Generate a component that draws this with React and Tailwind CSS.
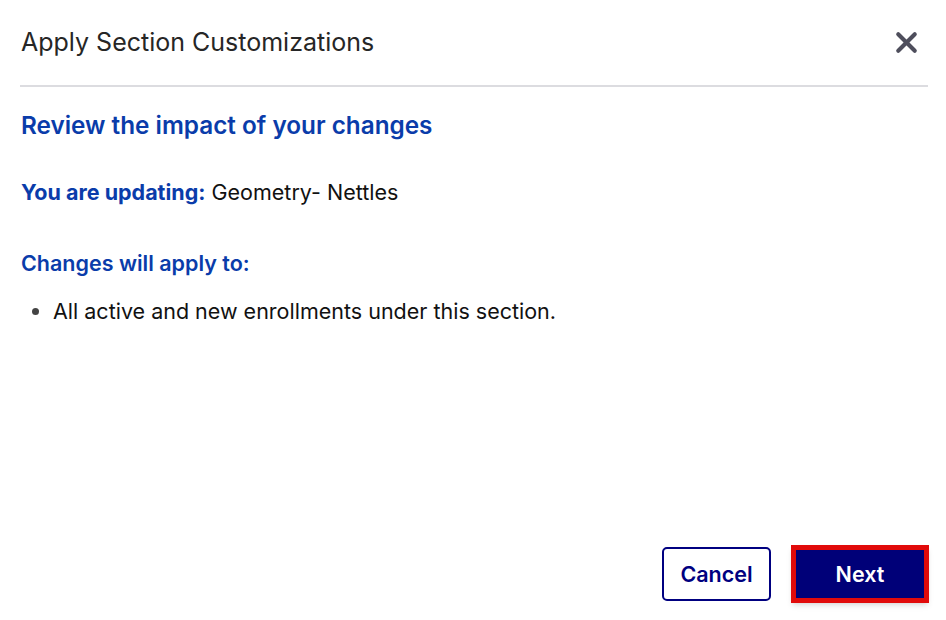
import { X } from 'lucide-react'

export default function App() {
  return (
    <div className="flex h-[620px] w-[946px] flex-col bg-white pl-5 pr-[17px] font-['Inter',sans-serif]">
      <div className="mr-[1px] flex h-[87px] items-center justify-between border-b-2 border-[#dcdce0] pb-[2px] pl-px">
        <h2 className="text-[25px] leading-[32px] text-[#262626]">Apply Section Customizations</h2>
        <button type="button" className="mr-[5px] mt-[2px] text-[#4e4e5c]">
          <X className="h-[33px] w-[33px]" strokeWidth={3} />
        </button>
      </div>

      <div className="pl-px">
        <h3 className="mt-[22px] text-[24.3px] font-semibold leading-[32px] text-[#0a3caa]">
          Review the impact of your changes
        </h3>
        <p className="mt-[36px] text-[21.5px] leading-[30px] text-[#111]">
          <span className="font-bold text-[#0a3caa]">You are updating:</span> Geometry- Nettles
        </p>
        <p className="mt-[41px] text-[21.5px] font-semibold leading-[30px] text-[#0a3caa]">Changes will apply to:</p>
        <ul className="mt-[18px] list-disc pl-[32px] text-[21.5px] leading-[30px] text-[#111] marker:text-[#444]">
          <li>All active and new enrollments under this section.</li>
        </ul>
      </div>

      <div className="mt-auto mb-[17px] flex justify-end gap-[20px]">
        <button
          type="button"
          className="mt-[2px] h-[54px] w-[109px] rounded-[5px] border-2 border-[#000080] text-[21.5px] font-semibold text-[#000080]"
        >
          Cancel
        </button>
        <button
          type="button"
          className="h-[58px] w-[138px] border-[5px] border-[#e10a0a] bg-[#000078] text-[21.5px] font-semibold text-white shadow-md"
        >
          Next
        </button>
      </div>
    </div>
  )
}
